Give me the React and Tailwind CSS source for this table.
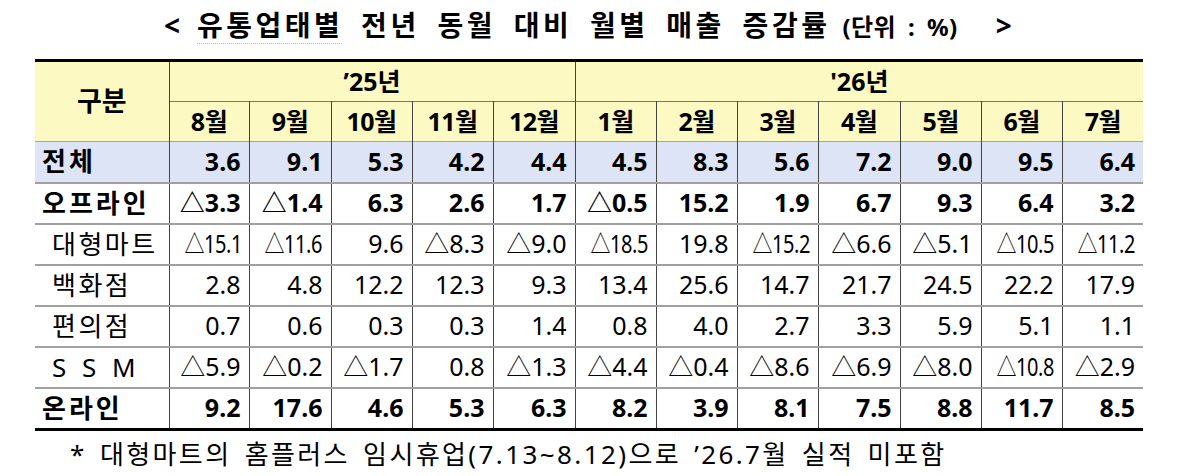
import React from 'react';

const months25 = ['8월', '9월', '10월', '11월', '12월'];
const months26 = ['1월', '2월', '3월', '4월', '5월', '6월', '7월'];
const colWidths = [80, 82, 81, 81, 82, 81, 81, 81, 82, 81, 81, 81];

const rows = [
    { label: '전체', bold: true, blue: true, values: ['3.6', '9.1', '5.3', '4.2', '4.4', '4.5', '8.3', '5.6', '7.2', '9.0', '9.5', '6.4'] },
    { label: '오프라인', bold: true, values: ['△3.3', '△1.4', '6.3', '2.6', '1.7', '△0.5', '15.2', '1.9', '6.7', '9.3', '6.4', '3.2'] },
    { label: '대형마트', values: ['△15.1', '△11.6', '9.6', '△8.3', '△9.0', '△18.5', '19.8', '△15.2', '△6.6', '△5.1', '△10.5', '△11.2'] },
    { label: '백화점', values: ['2.8', '4.8', '12.2', '12.3', '9.3', '13.4', '25.6', '14.7', '21.7', '24.5', '22.2', '17.9'] },
    { label: '편의점', values: ['0.7', '0.6', '0.3', '0.3', '1.4', '0.8', '4.0', '2.7', '3.3', '5.9', '5.1', '1.1'] },
    { label: 'S S M', values: ['△5.9', '△0.2', '△1.7', '0.8', '△1.3', '△4.4', '△0.4', '△8.6', '△6.9', '△8.0', '△10.8', '△2.9'] },
    { label: '온라인', bold: true, values: ['9.2', '17.6', '4.6', '5.3', '6.3', '8.2', '3.9', '8.1', '7.5', '8.8', '11.7', '8.5'] },
];

const Value = ({ v }) => {
    // long negative values are squeezed to fit the cell, as in the source sheet
    if (v.length > 4) {
        return <span className="inline-block origin-right scale-x-[0.8] tracking-[-0.5px]">{v}</span>;
    }
    return <span>{v}</span>;
};

export default function App() {
    return (
        <div className="w-[1200px] h-[476px] bg-white text-black font-['Noto_Sans','Noto_Sans_CJK_KR',sans-serif]">
            {/* Title */}
            <div className="flex items-baseline h-[50px] pt-[4px] pl-[164px] font-bold text-[28px] leading-[42px]">
                <span>&lt;</span>
                <span className="ml-[17px] tracking-[3.5px] [word-spacing:7px]">
                    <span className="underline decoration-dotted decoration-[#f0a860] decoration-1 underline-offset-[7px]">유통업태별</span> 전년 동월 대비 월별 매출 증감률
                </span>
                <span className="ml-[12px] text-[24px] tracking-[0.5px] [word-spacing:5px]">(단위 : %)</span>
                <span className="ml-[38px]">&gt;</span>
            </div>

            {/* Table */}
            <table className="mt-[9px] ml-[35px] w-[1108px] table-fixed border-collapse border-t-[3px] border-b-[3px] border-black">
                <colgroup>
                    <col className="w-[134px]" />
                    {colWidths.map((w, i) => (
                        <col key={i} style={{ width: w }} />
                    ))}
                </colgroup>
                <thead className="bg-[#fcf9c3]">
                    <tr className="h-[41px]">
                        <th rowSpan={2} className="text-[27px] font-bold text-center">구분</th>
                        <th colSpan={5} className="border-l border-[#444] text-[25px] font-bold">’25년</th>
                        <th colSpan={7} className="border-l border-[#444] text-[25px] font-bold">'26년</th>
                    </tr>
                    <tr className="h-[40px] border-t border-[#777]">
                        {[...months25, ...months26].map((m) => (
                            <th key={m} className="border-l border-[#444] text-[25px] font-bold tracking-[-0.5px]">{m}</th>
                        ))}
                    </tr>
                </thead>
                <tbody>
                    {rows.map((r, idx) => (
                        <tr
                            key={r.label}
                            className={`h-[41px] ${idx === 0 ? 'bg-[#dde4f6] border-t border-[#9aa]' : 'border-t-2 border-[#a0a0a0]'}`}
                        >
                            <td
                                className={`text-[26px] whitespace-nowrap ${r.bold ? 'font-bold pl-[7px] tracking-[3px]' : 'pl-[17px] tracking-[2.5px] [word-spacing:4px]'}`}
                            >
                                {r.label}
                            </td>
                            {r.values.map((v, i) => (
                                <td
                                    key={i}
                                    className={`border-l border-[#444] text-right pr-[8px] text-[25px] ${r.bold ? 'font-bold' : ''}`}
                                >
                                    <Value v={v} />
                                </td>
                            ))}
                        </tr>
                    ))}
                </tbody>
            </table>

            {/* Footnote */}
            <p className="mt-[6px] pl-[70px] text-[26px] leading-[34px] tracking-[2.4px] [word-spacing:4px] whitespace-nowrap">
                * 대형마트의 홈플러스 임시휴업(7.13~8.12)으로 ’26.7월 실적 미포함
            </p>
        </div>
    );
}
